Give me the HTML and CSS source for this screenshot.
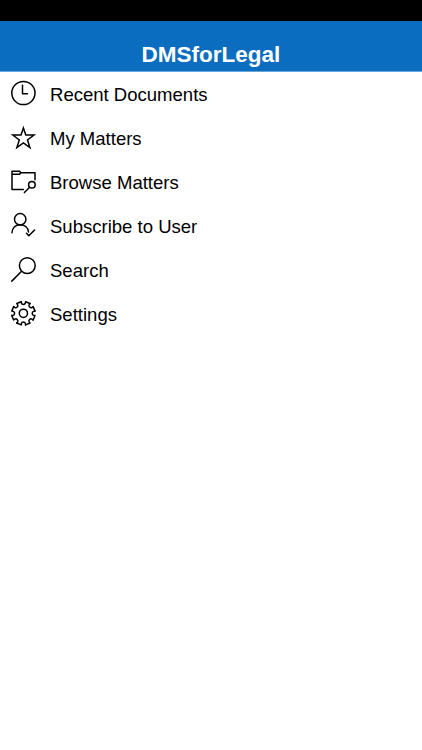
FILE: index.html
```html
<!DOCTYPE html>
<html lang="en">
<head>
<meta charset="utf-8">
<title>DMSforLegal</title>
<link rel="stylesheet" href="styles.css">
</head>
<body>
<div class="status-bar"></div>
<header class="header"><h1 class="title">DMSforLegal</h1></header>
<nav class="menu">
  <a class="item"><svg class="icon" viewBox="0 0 50 44"><circle cx="23.4" cy="21" r="11.6"/><path d="M22.5 13.2v8.6H27.5"/></svg><span>Recent Documents</span></a>
  <a class="item"><svg class="icon" viewBox="0 0 50 44"><path class="miter" d="M23.4 12L25.8 19.1h8.2l-6.5 4.9 2.4 7.6-6.5-4.7-6.5 4.7 2.4-7.6-6.5-4.9h8.2z"/></svg><span>My Matters</span></a>
  <a class="item"><svg class="icon" viewBox="0 0 50 44"><path d="M23.3 29.5H12V11.3h7.6l1.2 1.4H35v7M12 14.3h7.6l1.2-1.6M29.6 27.2l-5.2 5.4"/><circle cx="31.9" cy="24.8" r="3.3"/></svg><span>Browse Matters</span></a>
  <a class="item"><svg class="icon" viewBox="0 0 50 44"><circle cx="20.2" cy="15.2" r="5.7"/><path d="M12 28.8c0-4.8 3.4-8 8.2-8s8 3 8.3 7.2M26.4 29.2l2.4 2.5 5.8-5.7"/></svg><span>Subscribe to User</span></a>
  <a class="item"><svg class="icon" viewBox="0 0 50 44"><circle cx="27.3" cy="17.6" r="7.9"/><path d="M21.6 23.3l-9.8 9.8"/></svg><span>Search</span></a>
  <a class="item"><svg class="icon" viewBox="0 0 50 44"><defs><path id="tooth" d="M-2.2-11.6L-1.9-10Q-1.6-8.8 0-8.8T1.9-10L2.2-11.6L6.65-9.76"/></defs><g transform="translate(23.4 21.3)"><circle r="4.1"/><use href="#tooth"/><use href="#tooth" transform="rotate(45)"/><use href="#tooth" transform="rotate(90)"/><use href="#tooth" transform="rotate(135)"/><use href="#tooth" transform="rotate(180)"/><use href="#tooth" transform="rotate(225)"/><use href="#tooth" transform="rotate(270)"/><use href="#tooth" transform="rotate(315)"/></g></svg><span>Settings</span></a>
</nav>
</body>
</html>
```
FILE: styles.css
```css
body {
  margin: 0;
  min-height: 100vh;
  background: #fff;
  color: #000;
  font-family: "Liberation Sans", Arial, sans-serif;
}
.status-bar {
  height: 21px;
  background: #000;
}
.header {
  box-sizing: border-box;
  height: 51px;
  padding-top: 21px;
  background: #0b6dbf;
  border-bottom: 1px solid #69a5d8;
}
.title {
  margin: 0;
  color: #fff;
  font-size: 22.5px;
  line-height: 26px;
  text-align: center;
}
.menu {
  display: flex;
  flex-direction: column;
}
.item {
  display: flex;
  align-items: center;
  height: 44px;
  font-size: 18.55px;
  line-height: 42px;
}
.item span {
  padding-top: 2px;
}
.icon {
  width: 50px;
  height: 44px;
  fill: none;
  stroke: #000;
  stroke-width: 1.5;
  stroke-linecap: round;
  stroke-linejoin: round;
}
.miter {
  stroke-linejoin: miter;
}
```
